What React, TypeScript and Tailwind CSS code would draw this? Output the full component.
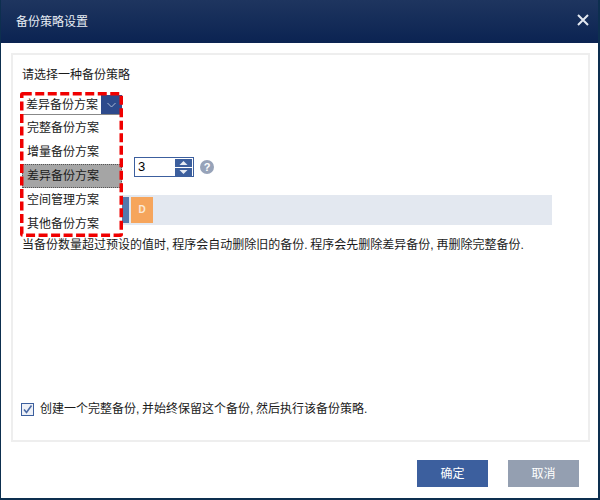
import React from "react";

const font = { fontFamily: '"Liberation Sans", "Noto Sans CJK SC", sans-serif' };
const options = ["完整备份方案", "增量备份方案", "差异备份方案", "空间管理方案", "其他备份方案"];

export default function App() {
  return (
    <div style={font} className="w-[600px] h-[500px] flex flex-col bg-white border-l border-r-2 border-b-2 border-[#0d2f4f] text-[12px] leading-[16px] text-[#1a1a1a] overflow-hidden">
      <div className="h-[43px] shrink-0 -ml-[1px] -mr-[2px] flex items-center justify-between pl-[16px] pr-[10px] bg-gradient-to-b from-[#1e355f] to-[#0b2352] text-white">
        <span className="text-[12px] text-[#e8edf4]">备份策略设置</span>
        <svg width="14" height="14" viewBox="0 0 14 14" className="-mt-[4px]">
          <path d="M2 2 L12 12 M12 2 L2 12" stroke="#e3e8f0" strokeWidth="2" />
        </svg>
      </div>
      <div className="relative mt-[10px] ml-[10px] mr-[8px] h-[389px] border-2 border-[#eeeeee] shrink-0 pl-[9px] pt-[12px]">
        <div className="h-[16px]">请选择一种备份策略</div>

        <div className="relative mt-[12px] w-[100px]">
          <div className="h-[20px] flex items-center justify-between pl-[4px] border-b border-[#888888] bg-white">
            <span>差异备份方案</span>
            <span className="w-[21px] h-[19px] flex items-center justify-center bg-[#2d4a8c]">
              <svg width="9" height="6" viewBox="0 0 9 6">
                <path d="M0.5 1 L4.5 5 L8.5 1" fill="none" stroke="#a9b8d4" strokeWidth="1" />
              </svg>
            </span>
          </div>
          <div className="absolute left-0 top-[21px] w-[100px] z-10 bg-white flex flex-col">
            {options.map((o, i) => (
              <div
                key={o}
                className={
                  i === 2
                    ? "h-[24px] flex items-center pl-[4px] bg-[#a5a5a5] border border-dotted border-[#555555]"
                    : "h-[24px] flex items-center pl-[5px]"
                }
              >
                {o}
              </div>
            ))}
          </div>
        </div>

        <div className="mt-[42px] ml-[112px] flex items-center h-[20px]">
          <div className="w-[60px] h-[20px] border border-[#3c5f9e] flex items-center justify-between pl-[3px] pr-[1px] text-[13px] text-black">
            <span>3</span>
            <div className="flex flex-col gap-[1px]">
              <span className="w-[17px] h-[8px] bg-[#3c5f9e] flex items-center justify-center">
                <svg width="9" height="4" viewBox="0 0 9 4"><path d="M0.5 4 L4.5 0 L8.5 4 Z" fill="#e6ebf3" /></svg>
              </span>
              <span className="w-[17px] h-[8px] bg-[#3c5f9e] flex items-center justify-center">
                <svg width="9" height="4" viewBox="0 0 9 4"><path d="M0.5 0 L4.5 4 L8.5 0 Z" fill="#e6ebf3" /></svg>
              </span>
            </div>
          </div>
          <span className="ml-[6px] w-[14px] h-[14px] rounded-full bg-[#97a3b9] text-white text-[11px] font-bold flex items-center justify-center">?</span>
        </div>

        <div className="mt-[18px] w-[530px] h-[30px] bg-[#e3e8f0] flex items-center pl-[100px]">
          <div className="w-[7px] h-[26px] bg-[#5579ac]" />
          <div className="ml-[2px] w-[22px] h-[26px] bg-[#f6a55c] text-[#fbe9d8] text-[10px] font-bold flex items-center justify-center">D</div>
        </div>

        <div className="mt-[12px] whitespace-nowrap [word-spacing:-0.5px]">当备份数量超过预设的值时, 程序会自动删除旧的备份. 程序会先删除差异备份, 再删除完整备份.</div>

        <label className="absolute left-[8px] top-[346px] flex items-center">
          <span className="w-[13px] h-[13px] border border-[#3c5f9e] bg-[#eef1f7] flex items-center justify-center">
            <svg width="11" height="11" viewBox="0 0 11 11">
              <path d="M2 5.5 L4.5 8.5 L9.5 1.5" fill="none" stroke="#4a6aa5" strokeWidth="1.6" />
            </svg>
          </span>
          <span className="ml-[6px] [word-spacing:-0.67px]">创建一个完整备份, 并始终保留这个备份, 然后执行该备份策略.</span>
        </label>

        <svg width="103" height="145" viewBox="0 0 103 145" className="absolute left-[7px] top-[37px] z-20 pointer-events-none">
          <rect x="1.75" y="1.75" width="99.5" height="141.5" rx="1" fill="none" stroke="#f00000" strokeWidth="3.5" strokeDasharray="9 3.5" />
        </svg>
      </div>
      <div className="flex justify-end gap-[20px] mt-[18px] mr-[19px]">
        <button className="w-[71px] h-[27px] bg-[#3c5f9e] text-white text-[12px]">确定</button>
        <button className="w-[71px] h-[27px] bg-[#949fb1] text-white text-[12px]">取消</button>
      </div>
    </div>
  );
}
